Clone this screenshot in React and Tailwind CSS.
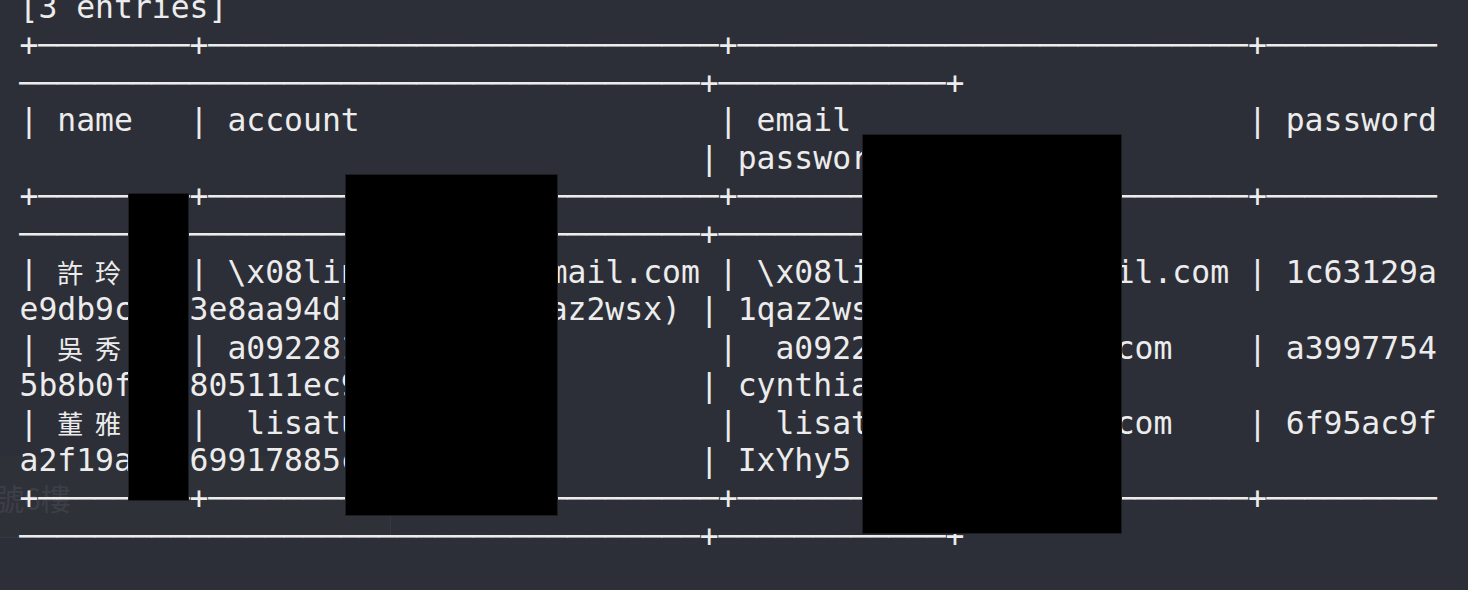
import React from "react";

// terminal grid: 75 columns, 18.9px per cell
const dash = (n) => "─".repeat(n);
const pad = (s, n) => s + " ".repeat(Math.max(0, n - s.length));

const TOP = "+" + dash(8) + "+" + dash(27) + "+" + dash(27) + "+" + dash(9);
const TOP_WRAP = dash(36) + "+" + dash(12) + "+";

const LINES = [
  "[3 entries]",
  TOP,
  TOP_WRAP,
  "| name   |" + pad(" account", 27) + "|" + pad(" email", 27) + "| password",
  " ".repeat(36) + "|" + pad(" password", 12) + "|",
  TOP,
  TOP_WRAP,
  "| 許玲   |" + pad(" \\x08linglin0912@gmail.com", 27) + "|" + pad(" \\x08linglin0912@gmail.com", 27) + "| 1c63129a",
  "e9db9ca1f3e8aa94d7b2c0e5 (1qaz2wsx) |" + pad(" 1qaz2wsx", 12) + "|",
  "| 吳秀   |" + pad(" a0922812345", 27) + "|" + pad("  a0922812345@yahoo.com", 27) + "| a3997754",
  "5b8b0f2c4805111ec9d03f7a" + " ".repeat(12) + "|" + pad(" cynthia520", 12) + "|",
  "| 董雅   |" + pad("  lisatung428", 27) + "|" + pad("  lisatung428@gmail.com", 27) + "| 6f95ac9f",
  "a2f19ae0769917885c4d2b13" + " ".repeat(12) + "|" + pad(" IxYhy5", 12) + "|",
  TOP,
  TOP_WRAP,
];

const isWide = (ch) => /[\u3000-\u9fff\uff00-\uffef]/.test(ch);

function Line({ text }) {
  const parts = [];
  let buf = "";
  let i = 0;
  for (const ch of text) {
    if (isWide(ch)) {
      if (buf) parts.push(buf);
      buf = "";
      parts.push(
        <span
          key={i}
          className="inline-block w-[37.8px] text-[26px] font-['Noto_Sans_CJK_TC',sans-serif]"
        >
          {ch}
        </span>
      );
    } else {
      buf += ch;
    }
    i++;
  }
  if (buf) parts.push(buf);
  return <div className="h-[37.77px] whitespace-pre">{parts}</div>;
}

export default function App() {
  return (
    <div className="relative w-[1468px] h-[590px] overflow-hidden bg-[#2d2f38]">
      {/* faint remnant of the window underneath */}
      <div className="absolute left-0 top-[456px] w-[391px] h-[82px] border-r border-b border-[#363841] bg-[#2f3139]"></div>
      <div className="absolute left-[-6px] top-[482px] text-[30px] leading-none text-[#3d3f47] font-['Noto_Sans_CJK_TC',sans-serif]">
        號6樓
      </div>

      <div className="relative mt-[-11px] pl-[19.5px] text-[31.4px] leading-[37.77px] text-[#ececec] font-['DejaVu_Sans_Mono',monospace]">
        {LINES.map((l, i) => (
          <Line key={i} text={l} />
        ))}
      </div>

      {/* redaction boxes */}
      <div className="absolute left-[128px] top-[193px] w-[61px] h-[308px] bg-black border border-[#1c1d22]"></div>
      <div className="absolute left-[345px] top-[174px] w-[213px] h-[342px] bg-black border border-[#1c1d22]"></div>
      <div className="absolute left-[862px] top-[134px] w-[260px] h-[400px] bg-black border border-[#1c1d22]"></div>
    </div>
  );
}
